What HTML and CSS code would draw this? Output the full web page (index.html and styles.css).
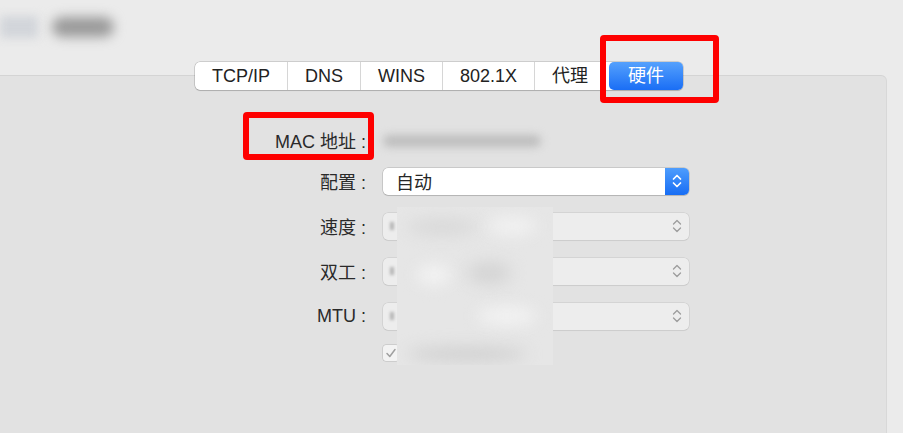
FILE: index.html
```html
<!DOCTYPE html>
<html lang="zh-CN">
<head>
  <meta charset="UTF-8">
  <title>硬件</title>
  <link rel="stylesheet" href="styles.css">
</head>
<body>

<div class="window">
  <header class="titlebar">
    <span class="blur-icon"></span>
    <span class="blur-title"></span>
  </header>

  <section class="panel">
    <nav class="tabs">
      <span class="tab">TCP/IP</span>
      <span class="tab">DNS</span>
      <span class="tab">WINS</span>
      <span class="tab">802.1X</span>
      <span class="tab">代理</span>
      <span class="tab active">硬件</span>
    </nav>

    <div class="form">
      <div class="row mac">
        <label>MAC 地址<span class="colon">:</span></label>
        <span class="mac-value"></span>
      </div>
      <div class="row">
        <label>配置<span class="colon">:</span></label>
        <div class="select primary">
          <span>自动</span>
          <span class="stepper">
            <svg width="10" height="16" viewBox="0 0 10 16"><path d="M1.5 6 L5 2.5 L8.5 6 M1.5 10 L5 13.5 L8.5 10" fill="none" stroke="currentColor" stroke-width="1.7" stroke-linecap="round" stroke-linejoin="round"/></svg>
          </span>
        </div>
      </div>
      <div class="row">
        <label>速度<span class="colon">:</span></label>
        <div class="select disabled">
          <span class="peek"></span>
          <span class="stepper">
            <svg width="10" height="16" viewBox="0 0 10 16"><path d="M1.5 6 L5 2.5 L8.5 6 M1.5 10 L5 13.5 L8.5 10" fill="none" stroke="currentColor" stroke-width="1.3" stroke-linecap="round" stroke-linejoin="round"/></svg>
          </span>
        </div>
      </div>
      <div class="row">
        <label>双工<span class="colon">:</span></label>
        <div class="select disabled">
          <span class="peek"></span>
          <span class="stepper">
            <svg width="10" height="16" viewBox="0 0 10 16"><path d="M1.5 6 L5 2.5 L8.5 6 M1.5 10 L5 13.5 L8.5 10" fill="none" stroke="currentColor" stroke-width="1.3" stroke-linecap="round" stroke-linejoin="round"/></svg>
          </span>
        </div>
      </div>
      <div class="row">
        <label>MTU<span class="colon">:</span></label>
        <div class="select disabled">
          <span class="peek"></span>
          <span class="stepper">
            <svg width="10" height="16" viewBox="0 0 10 16"><path d="M1.5 6 L5 2.5 L8.5 6 M1.5 10 L5 13.5 L8.5 10" fill="none" stroke="currentColor" stroke-width="1.3" stroke-linecap="round" stroke-linejoin="round"/></svg>
          </span>
        </div>
      </div>
      <div class="row check">
        <span></span>
        <span class="checkbox">
          <svg width="12" height="12" viewBox="0 0 12 12"><path d="M2 6.5 L4.8 9.5 L10 2.5" fill="none" stroke="#a0a0a0" stroke-width="1.5" stroke-linecap="round" stroke-linejoin="round"/></svg>
        </span>
      </div>

      <div class="blur-patch">
        <span class="blob b1"></span>
        <span class="blob b2"></span>
        <span class="blob b3"></span>
        <span class="blob b4"></span>
        <span class="blob b5"></span>
        <span class="blob b6"></span>
      </div>
    </div>
  </section>

  <div class="mark mark-tab"></div>
  <div class="mark mark-mac"></div>
</div>

</body>
</html>
```

FILE: styles.css
```css
body {
  margin: 0;
  font-family: "Liberation Sans", "Noto Sans CJK SC", sans-serif;
  background-color: #ebebeb;
  color: #262626;
  overflow: hidden;
}
.window {
  position: relative;
  height: 433px;
  display: flex;
  flex-direction: column;
}
.titlebar {
  height: 75px;
  box-sizing: border-box;
  padding-top: 16px;
  display: flex;
  align-items: flex-start;
  gap: 14px;
}
.blur-icon {
  width: 38px;
  height: 22px;
  background: #d2d5da;
  filter: blur(5px);
}
.blur-title {
  width: 62px;
  height: 20px;
  margin-top: 1px;
  background: #9a9a9a;
  border-radius: 10px;
  filter: blur(6px);
}
.panel {
  flex: 1;
  margin-right: 16px;
  background-color: #e2e2e2;
  border-top: 1px solid #d4d4d4;
  border-right: 1px solid #d8d8d8;
  border-top-right-radius: 6px;
}
.tabs {
  display: flex;
  width: max-content;
  height: 28px;
  margin: -14px 0 0 195px;
  background: #fff;
  border-radius: 5px;
  box-shadow: 0 0 0 0.5px rgba(0,0,0,0.25), 0 1px 1px rgba(0,0,0,0.12);
}
.tab {
  padding: 0 17px;
  line-height: 28px;
  font-size: 18px;
  color: #222;
  border-left: 1px solid #d6d6d6;
}
.tab:first-child {
  border-left: 0;
}
.tab.active {
  margin-left: 4px;
  padding: 0 19px;
  border-left: 0;
  border-radius: 5px;
  color: #fff;
  background: linear-gradient(#55a1fd, #1a6ef5);
}
.form {
  position: relative;
  width: 449px;
  margin: 36px 0 0 240px;
  display: flex;
  flex-direction: column;
  gap: 17px;
}
.row {
  height: 28px;
  display: grid;
  grid-template-columns: 132px 306px;
  column-gap: 11px;
  align-items: center;
}
.row.mac {
  margin-bottom: -4px;
}
.row.check {
  height: 20px;
  margin-top: -4px;
}
label {
  padding-right: 6px;
  text-align: right;
  font-size: 18px;
  color: #2a2a2a;
}
.colon {
  margin-left: 5px;
}
.mac-value {
  width: 158px;
  height: 12px;
  margin-top: 2px;
  background: #bdbdbd;
  border-radius: 6px;
  filter: blur(4px);
}
.select {
  height: 27px;
  box-sizing: border-box;
  padding-left: 13px;
  display: flex;
  align-items: center;
  justify-content: space-between;
  font-size: 18px;
  background: #fff;
  border-radius: 5px;
  box-shadow: 0 0 0 0.5px rgba(0,0,0,0.22), 0 1px 1px rgba(0,0,0,0.1);
}
.select.disabled {
  background: #ededed;
  box-shadow: 0 0 0 0.5px rgba(0,0,0,0.12), 0 1px 1px rgba(0,0,0,0.04);
}
.stepper {
  width: 24px;
  height: 100%;
  display: flex;
  align-items: center;
  justify-content: center;
}
.select.primary .stepper {
  color: #fff;
  background: linear-gradient(#4e9dfd, #176df4);
  border-radius: 0 5px 5px 0;
}
.select.disabled .stepper {
  color: #9c9c9c;
}
.peek {
  width: 4px;
  height: 8px;
  margin-left: -6px;
  background: #b5b5b5;
  filter: blur(1.5px);
}
.checkbox {
  width: 16px;
  height: 16px;
  display: flex;
  align-items: center;
  justify-content: center;
  background: #f3f3f3;
  border-radius: 3px;
  box-shadow: 0 0 0 0.5px rgba(0,0,0,0.18);
}
.blur-patch {
  position: absolute;
  left: 157px;
  top: 81px;
  width: 156px;
  height: 158px;
  overflow: hidden;
  background: #e6e6e6;
}
.blob {
  position: absolute;
  border-radius: 50%;
  filter: blur(8px);
}
.b1 { left: 10px; top: 12px; width: 70px; height: 16px; background: #d8d8d8; }
.b2 { left: 70px; top: 55px; width: 44px; height: 22px; background: #d4d4d4; }
.b3 { left: 20px; top: 58px; width: 34px; height: 20px; background: #f3f3f3; }
.b4 { left: 80px; top: 100px; width: 60px; height: 18px; background: #f3f3f3; }
.b5 { left: 10px; top: 140px; width: 120px; height: 14px; background: #cfcfcf; }
.b6 { left: 90px; top: 10px; width: 50px; height: 18px; background: #f2f2f2; }
.mark {
  position: absolute;
  box-sizing: border-box;
  border: 6px solid #fe0000;
  border-radius: 4px;
}
.mark-tab {
  left: 600px;
  top: 35px;
  width: 119px;
  height: 68px;
}
.mark-mac {
  left: 243px;
  top: 112px;
  width: 131px;
  height: 48px;
}
```
